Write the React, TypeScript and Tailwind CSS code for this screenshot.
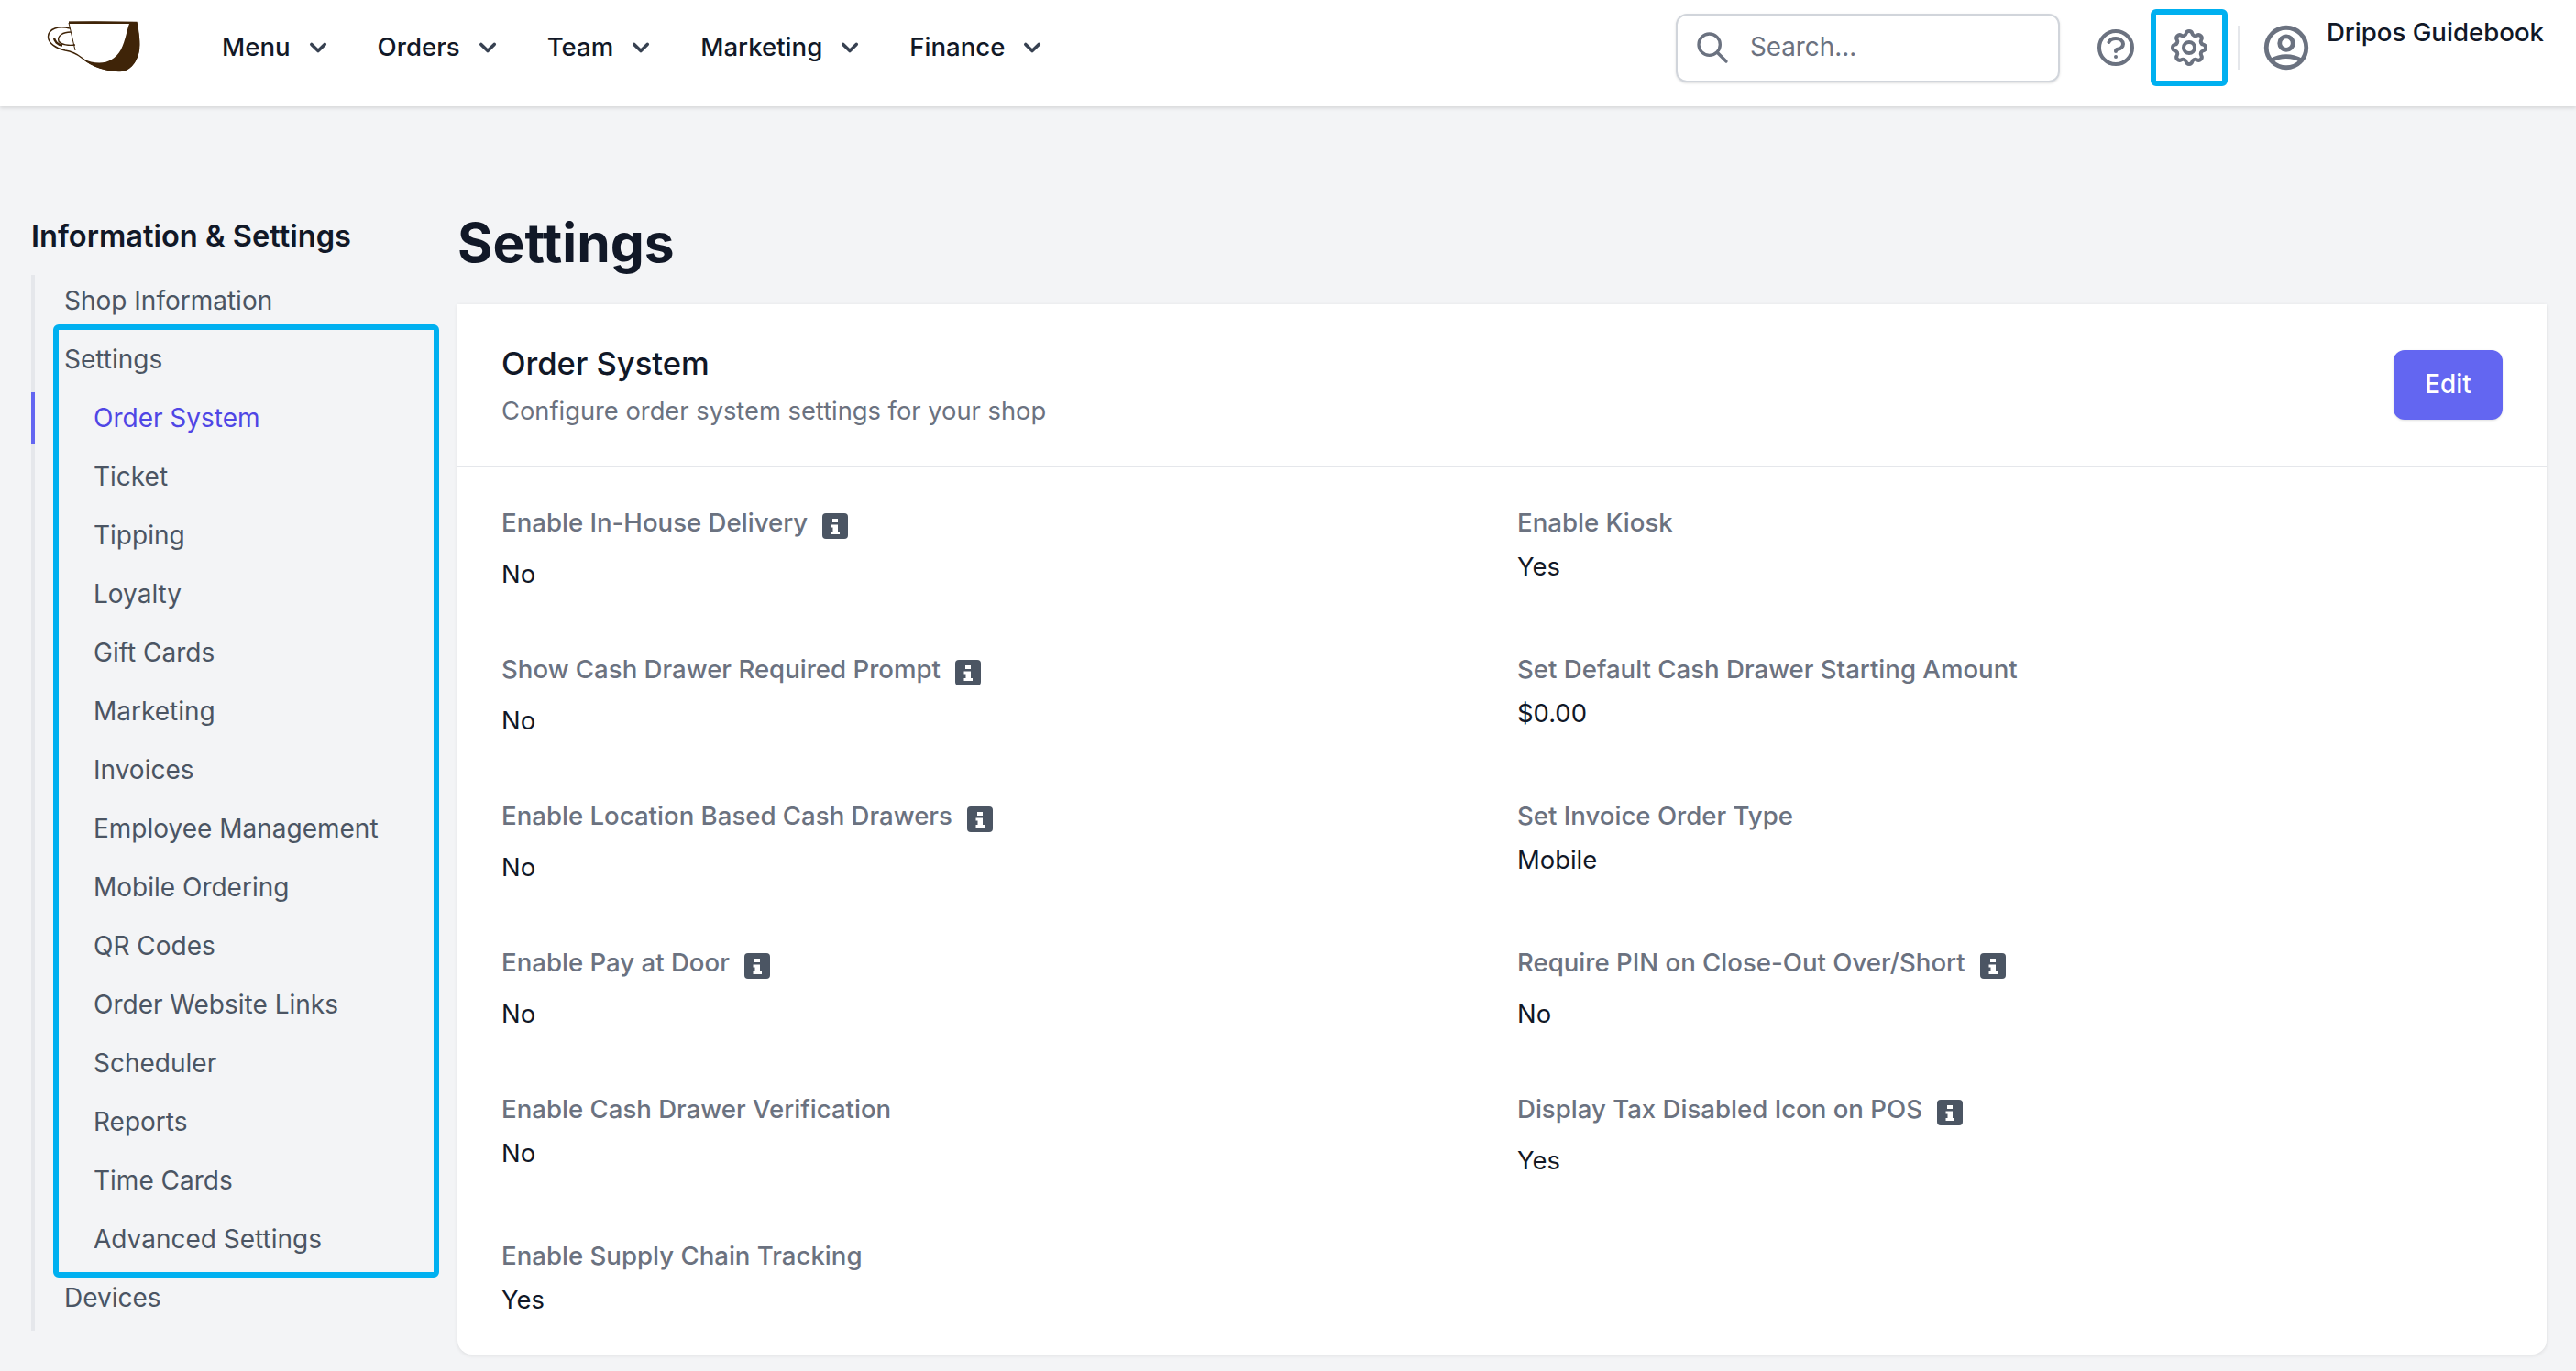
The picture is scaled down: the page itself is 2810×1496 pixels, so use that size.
import { HiChevronDown, HiOutlineCog, HiOutlineQuestionMarkCircle, HiOutlineSearch, HiOutlineUserCircle } from "react-icons/hi";

const NAV_ITEMS = ["Menu", "Orders", "Team", "Marketing", "Finance"];

const SETTINGS_LINKS = [
  "Order System",
  "Ticket",
  "Tipping",
  "Loyalty",
  "Gift Cards",
  "Marketing",
  "Invoices",
  "Employee Management",
  "Mobile Ordering",
  "QR Codes",
  "Order Website Links",
  "Scheduler",
  "Reports",
  "Time Cards",
  "Advanced Settings",
];

const FIELDS = [
  { label: "Enable In-House Delivery", value: "No", info: true },
  { label: "Enable Kiosk", value: "Yes", info: false },
  { label: "Show Cash Drawer Required Prompt", value: "No", info: true },
  { label: "Set Default Cash Drawer Starting Amount", value: "$0.00", info: false },
  { label: "Enable Location Based Cash Drawers", value: "No", info: true },
  { label: "Set Invoice Order Type", value: "Mobile", info: false },
  { label: "Enable Pay at Door", value: "No", info: true },
  { label: "Require PIN on Close-Out Over/Short", value: "No", info: true },
  { label: "Enable Cash Drawer Verification", value: "No", info: false },
  { label: "Display Tax Disabled Icon on POS", value: "Yes", info: true },
  { label: "Enable Supply Chain Tracking", value: "Yes", info: false },
];

function CupLogo() {
  return (
    <svg width="104" height="56" viewBox="0 0 104 56" className="block">
      <path
        d="M24 1.5 C40 0.5 75 1 98 1.5 C100 12 102 24 100 34 C97 46 90 54 80 54.5 C66 55 50 50 38 40 C33 36 27 33 20 32 C10 30 1.5 24 1.5 17 C2 8 13 5 25 8"
        fill="#fff"
        stroke="#3f2408"
        strokeWidth="1.4"
      />
      <path d="M24 0.5 L98 1 C100 12 103 24 100 35 C97 47 90 55 80 55 C66 55 50 51 39 41 C56 49 72 47 81 31 C86 21 87 11 90 3 L24 3 Z" fill="#3f2408" />
      <path d="M26 12 C18 12 11 16 13 22 C16 26 24 27 31 26" fill="none" stroke="#3f2408" strokeWidth="1.4" />
      <path d="M8 18 C8 22 12 26 17 26.5" fill="none" stroke="#3f2408" strokeWidth="2.4" />
      <path d="M24 2 L31 32" fill="none" stroke="#3f2408" strokeWidth="1" />
    </svg>
  );
}

function InfoBadge() {
  return (
    <svg width="28" height="28" viewBox="0 0 28 28" className="ml-4 mt-[10px] shrink-0">
      <rect width="28" height="28" rx="4" fill="#4b5563" />
      <rect x="11" y="6" width="6" height="4" fill="#fff" />
      <path d="M9.5 12.5 H17 V20 H19 V23 H9.5 V20 H11.5 V15.5 H9.5 Z" fill="#fff" />
    </svg>
  );
}

function SideLink({ label, active, sub }: { label: string; active?: boolean; sub?: boolean }) {
  return (
    <div className={`-ml-1 mb-2 flex h-14 items-center border-l-4 text-[28px] ${sub ? "pl-16" : "pl-8"} ${active ? "border-[#6366f1] text-[#4f46e5]" : "border-transparent text-[#4b5563]"}`}>
      {label}
    </div>
  );
}

export default function App() {
  return (
    <div className="h-[1496px] overflow-hidden bg-[#f3f4f6] font-['Inter',sans-serif]">
      <header className="flex h-[116px] items-center bg-white pb-[12px] shadow-[0_2px_4px_rgba(0,0,0,0.12)]">
        <div className="ml-[51px] mt-[-2px] w-[191px] shrink-0">
          <CupLogo />
        </div>
        <nav className="flex items-center text-[27.6px] font-[450] text-[#111827]">
          {NAV_ITEMS.map((item) => (
            <div key={item} className="mr-[46px] flex items-center">
              <span>{item}</span>
              <HiChevronDown className="ml-[12px] mr-[1px] h-[36px] w-[36px] text-[#374151]" />
            </div>
          ))}
        </nav>
        <div className="ml-auto flex items-center">
          <div className="flex h-[75px] w-[419px] items-center rounded-xl border-2 border-[#d1d5db] pl-[18px] shadow-sm">
            <HiOutlineSearch className="h-[40px] w-[40px] text-[#6b7280]" />
            <span className="ml-[21px] text-[27.8px] text-[#6b7280]">Search...</span>
          </div>
          <HiOutlineQuestionMarkCircle className="ml-[37px] h-[48px] w-[48px] text-[#6b7280]" />
          <div className="relative ml-[32px] flex h-[48px] w-[48px] items-center justify-center">
            <HiOutlineCog className="h-[48px] w-[48px] text-[#6b7280]" />
            <div className="absolute -inset-x-[18px] -inset-y-[18px] rounded-md border-[6px] border-[#00b0f0]" />
          </div>
          <div className="ml-[29px] h-[48px] w-[2px] bg-[#e5e7eb]" />
          <HiOutlineUserCircle className="ml-[22px] h-[58px] w-[58px] text-[#6b7280]" />
          <span className="mb-[32px] ml-[15px] mr-[35px] text-[27.6px] font-[450] text-[#111827]">Dripos Guidebook</span>
        </div>
      </header>

      <div className="flex">
        <aside className="ml-[34px] w-[465px] shrink-0 pt-[104px]">
          <div className="flex h-[80px] items-center pb-[6px] text-[32.6px] font-semibold text-[#111827]">Information &amp; Settings</div>
          <div className="relative flex w-[420px] flex-col border-l-4 border-[#e5e7eb]">
            <SideLink label="Shop Information" />
            <SideLink label="Settings" />
            {SETTINGS_LINKS.map((link, index) => (
              <SideLink key={link} label={link} sub active={index === 0} />
            ))}
            <SideLink label="Devices" />
            <div className="absolute left-[20px] top-[54px] h-[1040px] w-[421px] rounded-md border-[6px] border-[#00b0f0]" />
          </div>
        </aside>

        <main className="w-[2279px]">
          <h1 className="mt-[107px] h-[109px] text-[58.7px] font-bold leading-[84px] text-[#111827]">Settings</h1>
          <section className="h-[1146px] rounded-b-2xl bg-white shadow-[0_1px_4px_rgba(0,0,0,0.1)]">
            <div className="flex h-[178px] items-center justify-between border-b-2 border-[#e5e7eb] px-12">
              <div className="-mt-[2px]">
                <h2 className="text-[34.6px] font-[450] leading-[52px] text-[#111827]">Order System</h2>
                <p className="mt-[7px] text-[27.3px] leading-[40px] text-[#6b7280]">Configure order system settings for your shop</p>
              </div>
              <button className="h-[76px] w-[119px] rounded-xl bg-[#6366f1] text-[27.8px] font-[450] text-white shadow-sm">Edit</button>
            </div>
            <div className="grid grid-cols-[1108px_1fr] px-12 pt-10">
              {FIELDS.map((field) => (
                <div key={field.label} className="h-40">
                  <div className={`flex items-start ${field.info ? "h-12" : "h-10"}`}>
                    <span className="text-[27.6px] font-[450] leading-10 text-[#6b7280]">{field.label}</span>
                    {field.info && <InfoBadge />}
                  </div>
                  <div className="mt-2 text-[27.4px] leading-10 text-[#111827]">{field.value}</div>
                </div>
              ))}
            </div>
          </section>
        </main>
      </div>
    </div>
  );
}
